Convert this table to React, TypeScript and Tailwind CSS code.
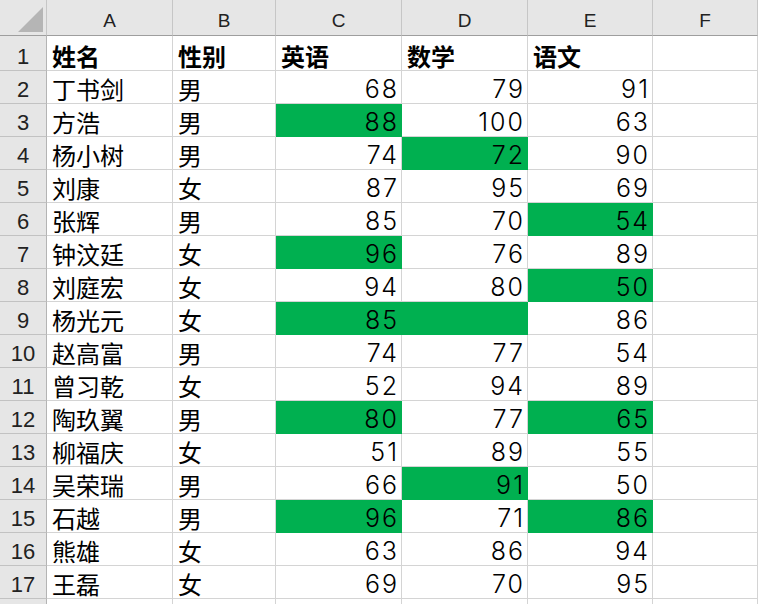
const cols = ['A', 'B', 'C', 'D', 'E', 'F'];
const colW = 'grid-cols-[47px_126px_103px_126px_126px_125px_1fr]';

type Row = { name: string; sex: string; en: number; math: number | null; cn: number; green: string[] };

const rows: Row[] = [
  { name: '丁书剑', sex: '男', en: 68, math: 79, cn: 91, green: [] },
  { name: '方浩', sex: '男', en: 88, math: 100, cn: 63, green: ['C'] },
  { name: '杨小树', sex: '男', en: 74, math: 72, cn: 90, green: ['D'] },
  { name: '刘康', sex: '女', en: 87, math: 95, cn: 69, green: [] },
  { name: '张辉', sex: '男', en: 85, math: 70, cn: 54, green: ['E'] },
  { name: '钟汶廷', sex: '女', en: 96, math: 76, cn: 89, green: ['C'] },
  { name: '刘庭宏', sex: '女', en: 94, math: 80, cn: 50, green: ['E'] },
  { name: '杨光元', sex: '女', en: 85, math: null, cn: 86, green: ['C', 'D'] },
  { name: '赵高富', sex: '男', en: 74, math: 77, cn: 54, green: [] },
  { name: '曾习乾', sex: '女', en: 52, math: 94, cn: 89, green: [] },
  { name: '陶玖翼', sex: '男', en: 80, math: 77, cn: 65, green: ['C', 'E'] },
  { name: '柳福庆', sex: '女', en: 51, math: 89, cn: 55, green: [] },
  { name: '吴荣瑞', sex: '男', en: 66, math: 91, cn: 50, green: ['D'] },
  { name: '石越', sex: '男', en: 96, math: 71, cn: 86, green: ['C', 'E'] },
  { name: '熊雄', sex: '女', en: 63, math: 86, cn: 94, green: [] },
  { name: '王磊', sex: '女', en: 69, math: 70, cn: 95, green: [] },
];

const cjk = { fontFamily: '"Noto Sans CJK SC", sans-serif' };
const num = { fontFamily: 'Inter, "Noto Sans CJK SC", sans-serif' };

const RowHead = ({ n, h }: { n?: string; h: string }) => (
  <div
    className={`${h} flex items-end justify-center pb-[2px] bg-[#e6e6e6] border-r border-b border-r-[#b4b4b4] border-b-[#c2c2c2] text-[22px] leading-none text-[#222] font-['Liberation_Sans',sans-serif]`}
  >
    {n}
  </div>
);

const Cell = ({
  children,
  green,
  right,
  bold,
  h = 'h-[33px]',
}: {
  children?: React.ReactNode;
  green?: boolean;
  right?: boolean;
  bold?: boolean;
  h?: string;
}) => (
  <div
    className={`${h} flex items-end border-r border-b text-black whitespace-nowrap ${
      green ? 'bg-[#00b050] border-[#00b050]' : 'bg-white border-[#d4d4d4]'
    } ${
      right
        ? 'justify-end pr-[2px] pb-[1px] text-[25px] leading-[25px] tracking-[2px] font-light'
        : 'pl-[5px] pb-[1px] text-[24px] leading-[26px]'
    } ${bold ? 'font-bold' : ''}`}
    style={right ? num : cjk}
  >
    {children}
  </div>
);

export default function App() {
  return (
    <div className="w-[758px] h-[604px] overflow-hidden bg-white">
      <div className={`grid ${colW}`}>
        {/* column headers */}
        <div className="h-[36px] relative bg-[#e6e6e6] border-r border-b border-r-[#c6c6c6] border-b-[#9e9e9e]">
          <svg className="absolute left-[18px] top-[7px]" width="25" height="25" viewBox="0 0 25 25">
            <polygon points="25,0 25,25 0,25" fill="#b5b5b5" />
          </svg>
        </div>
        {cols.map((c) => (
          <div
            key={c}
            className="h-[36px] flex items-end justify-center pb-[5px] bg-[#e6e6e6] border-r border-b border-r-[#c6c6c6] border-b-[#9e9e9e] text-[19px] leading-none text-[#222] font-['Liberation_Sans',sans-serif]"
          >
            {c}
          </div>
        ))}

        {/* title row */}
        <RowHead n="1" h="h-[35px]" />
        <Cell bold h="h-[35px]">姓名</Cell>
        <Cell bold h="h-[35px]">性别</Cell>
        <Cell bold h="h-[35px]">英语</Cell>
        <Cell bold h="h-[35px]">数学</Cell>
        <Cell bold h="h-[35px]">语文</Cell>
        <Cell h="h-[35px]" />

        {rows.map((r, i) => (
          <div key={r.name} className="contents">
            <RowHead n={String(i + 2)} h="h-[33px]" />
            <Cell>{r.name}</Cell>
            <Cell>{r.sex}</Cell>
            <Cell right green={r.green.includes('C')}>{r.en}</Cell>
            <Cell right green={r.green.includes('D')}>{r.math ?? ''}</Cell>
            <Cell right green={r.green.includes('E')}>{r.cn}</Cell>
            <Cell />
          </div>
        ))}

        {/* partly visible row 18 */}
        <RowHead h="h-[33px]" />
        <Cell />
        <Cell />
        <Cell />
        <Cell />
        <Cell />
        <Cell />
      </div>
    </div>
  );
}
